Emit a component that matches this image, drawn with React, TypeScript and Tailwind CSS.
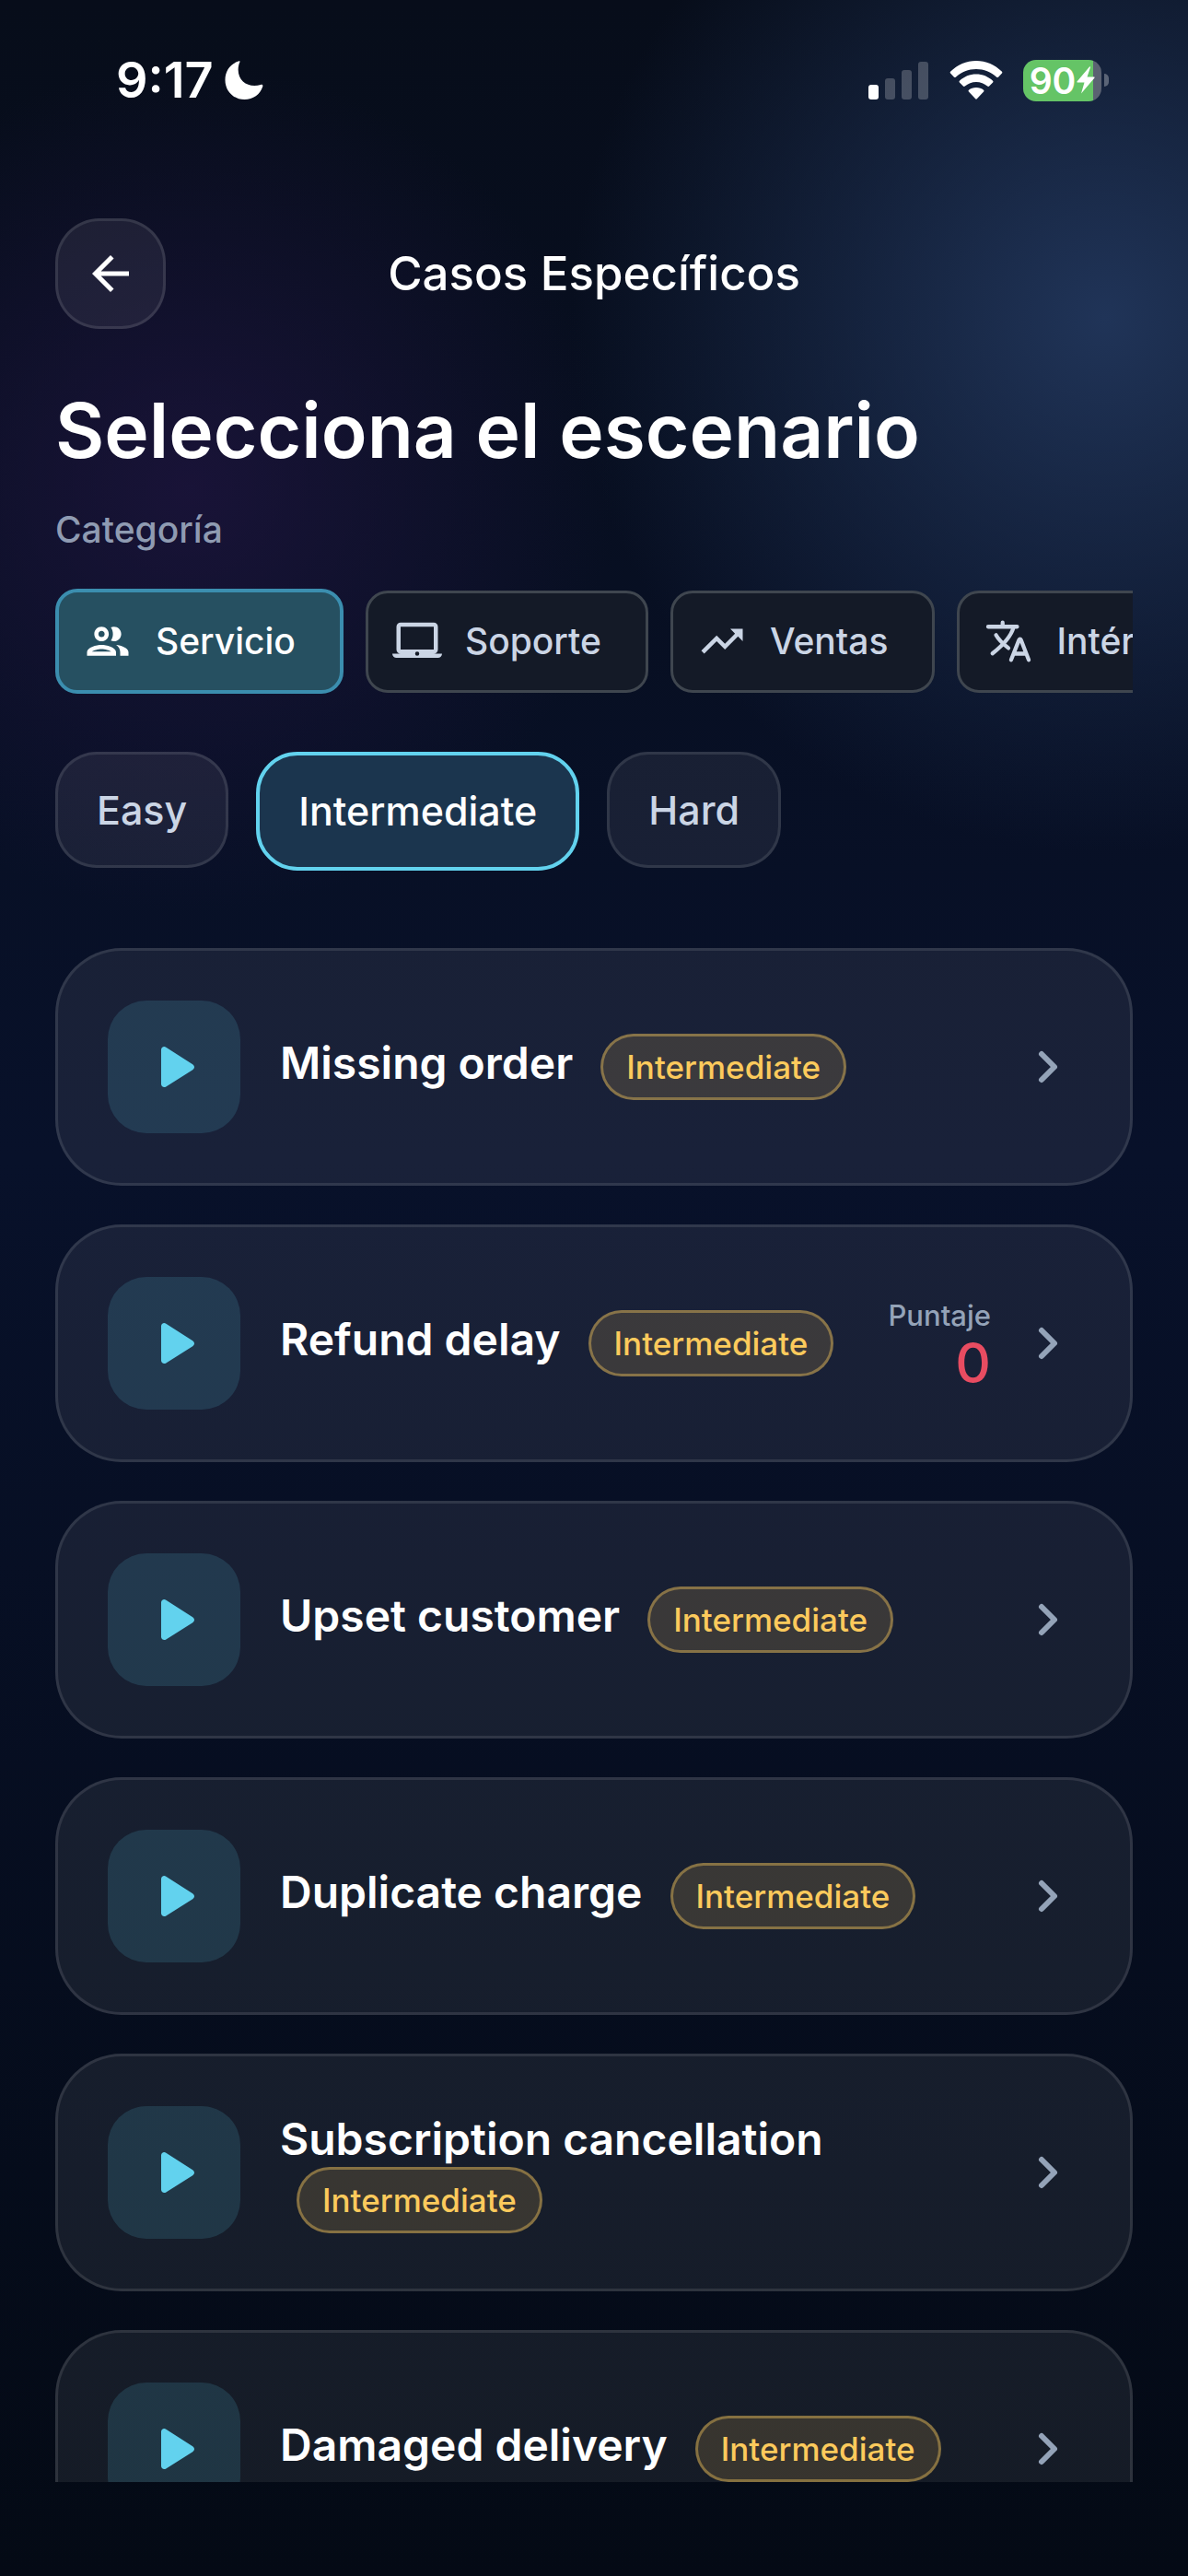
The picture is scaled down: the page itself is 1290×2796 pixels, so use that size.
import { useState } from "react";
import { MdArrowBack, MdTrendingUp } from "react-icons/md";

const PeopleIcon = () => (
  <svg className="size-[54px] shrink-0" viewBox="0 0 24 24" fill="currentColor">
    <path d="M9 13.750c-2.340 0-7 1.170-7 3.500V19h14v-1.750c0-2.330-4.660-3.500-7-3.500zM4.340 17c.84-.58 2.870-1.250 4.660-1.250s3.820.67 4.660 1.250H4.340zM9 12c1.930 0 3.500-1.570 3.500-3.500S10.930 5 9 5 5.500 6.570 5.500 8.500 7.070 12 9 12zm0-5c.83 0 1.500.67 1.500 1.500S9.830 10 9 10s-1.500-.67-1.500-1.500S8.170 7 9 7zm7.040 6.810c1.160.84 1.960 1.960 1.960 3.440V19h4v-1.750c0-2.020-3.500-3.170-5.960-3.440zM15 12c1.930 0 3.500-1.570 3.500-3.500S16.930 5 15 5c-.54 0-1.040.13-1.500.35.63.89 1 1.980 1 3.150s-.37 2.260-1 3.150c.46.22.96.35 1.500.35z" />
  </svg>
);

const LaptopIcon = () => (
  <svg className="size-[54px] shrink-0" viewBox="0 0 24 24" fill="currentColor">
    <path
      fillRule="evenodd"
      d="M20 18a2 2 0 0 0 2-2V5a2 2 0 0 0-2-2H4a2 2 0 0 0-2 2v11a2 2 0 0 0 2 2H0a2 2 0 0 0 2 2h20a2 2 0 0 0 2-2zM4 5h16v11H4zM12 19a1 1 0 1 1 0-2a1 1 0 0 1 0 2z"
    />
  </svg>
);

const TranslateIcon = () => (
  <svg
    className="size-[54px] shrink-0"
    viewBox="0 0 24 24"
    fill="none"
    stroke="currentColor"
    strokeWidth="1.900"
    strokeLinecap="round"
    strokeLinejoin="round"
  >
    <path d="M2.200 5h14M9.200 3v2M14.500 5.200C13.400 9.200 10 13.400 4.300 17.900M6 9c1.400 2.500 3.800 4.600 6 6.300M13.300 21l3.800-9.600q.5-1 1 0l3.700 9.600M14.600 18h5.800" />
  </svg>
);

const categories = [
  { id: "service", label: "Servicio", icon: <PeopleIcon /> },
  { id: "support", label: "Soporte", icon: <LaptopIcon /> },
  { id: "sales", label: "Ventas", icon: <MdTrendingUp size={54} className="shrink-0" /> },
  { id: "interpreter", label: "Intérprete", icon: <TranslateIcon /> },
];

const levels = ["Easy", "Intermediate", "Hard"];

// type
type Scenario = {
  title: string;
  level: string;
  score?: number;
};

const scenarios: Scenario[] = [
  { title: "Missing order", level: "Intermediate" },
  { title: "Refund delay", level: "Intermediate", score: 0 },
  { title: "Upset customer", level: "Intermediate" },
  { title: "Duplicate charge", level: "Intermediate" },
  { title: "Subscription cancellation", level: "Intermediate" },
  { title: "Damaged delivery", level: "Intermediate" },
];

const StatusBar = () => (
  <div className="flex h-[174px] shrink-0 items-center justify-between pl-[126px] pr-[86px]">
    <div className="flex items-center gap-3">
      <span className="text-[54px] leading-[60px] font-semibold">9:17</span>
      <svg className="size-[42px]" viewBox="0 0 42 43" fill="currentColor">
        <path d="M15.500.3C6 3 0 11 0 21.300C0 33.500 9 43 21.500 43C31 43 39 37.500 41.700 28.700C42.300 26.900 41 26 39.500 26.600C27 30.500 14.500 23.500 14.500 10C14.500 7 15.100 4 16.200 1.600C16.700.5 16.400 0 15.500.3Z" />
      </svg>
    </div>
    <div className="flex items-center">
      <svg className="h-[42px] w-[65px]" viewBox="0 0 65 42" fill="currentColor">
        <rect x="0" y="26" width="11" height="16" rx="3" />
        <rect x="18" y="19" width="11" height="23" rx="3" opacity="0.22" />
        <rect x="36" y="10" width="11" height="32" rx="3" opacity="0.22" />
        <rect x="54" y="1" width="11" height="41" rx="3" opacity="0.22" />
      </svg>
      <svg className="ml-[23px] h-[42px] w-[58px]" viewBox="0 0 57 42" fill="currentColor">
        <path d="M28.500 0C39 0 49 4.300 56.500 11.800Q57.300 12.700 56.500 13.600L52.500 17.700Q51.700 18.500 50.700 17.700C44.700 12 36.800 9 28.500 9S12.300 12 6.300 17.700Q5.300 18.500 4.500 17.700L.5 13.600Q-.3 12.700.5 11.800C8 4.300 18 0 28.500 0Z" />
        <path d="M28.500 14.500C35.300 14.500 41.700 17.100 46.600 21.700Q47.500 22.600 46.600 23.500L42.600 27.600Q41.700 28.500 40.700 27.600C37.400 24.700 33.100 23 28.500 23S19.600 24.700 16.300 27.600Q15.300 28.500 14.400 27.600L10.400 23.500Q9.500 22.600 10.400 21.700C15.300 17.100 21.700 14.500 28.500 14.500Z" />
        <path d="M28.500 29C31.600 29 34.500 30 36.600 31.800Q37.500 32.700 36.600 33.600L29.300 41.300Q28.500 42 27.700 41.300L20.400 33.600Q19.500 32.700 20.400 31.800C22.500 30 25.400 29 28.500 29Z" />
      </svg>
      <div className="ml-[22px] flex h-[45px] w-[85px] items-center justify-center rounded-[14px] bg-[linear-gradient(to_right,#65c466_90%,#5b6272_90%)]">
        <span className="text-[39px] leading-[45px] font-semibold">90</span>
        <svg className="ml-px h-[30px] w-[20px]" viewBox="0 0 20 30" fill="currentColor">
          <path d="M14 0.500L0.500 16.500Q0 17.500 1 17.500H8.500L5 29.500L19.500 12.500Q20 11.500 19 11.500H11.500L15 1Q15 0 14 0.500Z" />
        </svg>
      </div>
      <span className="ml-[3px] h-[14px] w-[5px] rounded-r-full bg-white/30" />
    </div>
  </div>
);

const ScenarioCard = ({ title, level, score }: Scenario) => (
  <li>
    <button
      type="button"
      className="flex h-[258px] w-full items-center rounded-[72px] border-3 border-white/10 bg-white/7 px-[54px] text-left"
    >
      <span className="flex size-[144px] shrink-0 items-center justify-center rounded-[42px] bg-[#5fd0ea]/15">
        <svg className="ml-2 h-[44px] w-[36px]" viewBox="0 0 36 44" fill="#62d2ee">
          <path d="M0 3.500C0 .6 3-.8 5.300.7L34.200 19.300C36.600 20.900 36.600 23.700 34.200 25.200L5.300 43.400C3 44.800 0 43.400 0 40.500Z" />
        </svg>
      </span>
      <span className="ml-[43px] flex-1 text-[48px] leading-[60px] font-semibold">
        {title}{" "}
        <span className="ml-[18px] inline-block rounded-full border-3 border-[#fcca5c]/40 bg-[#fcca5c]/15 px-[25px] align-middle text-[35px] leading-[66px] font-medium whitespace-nowrap text-[#fcca5c]">
          {level}
        </span>
      </span>
      {score !== undefined && (
        <span className="flex flex-col items-end font-medium">
          <span className="text-[31px] leading-[42px] text-[#94a3b8]">Puntaje</span>
          <span className="text-[60px] leading-[60px] text-[#e84c61]">{score}</span>
        </span>
      )}
      <svg
        className="ml-[27px] h-[54px] w-[70px] shrink-0"
        viewBox="0 0 70 54"
        fill="none"
        stroke="#94a3b8"
        strokeWidth="6"
        strokeLinecap="round"
        strokeLinejoin="round"
      >
        <path d="M28 13L42 27L28 41" />
      </svg>
    </button>
  </li>
);

const App = () => {
  const [category, setCategory] = useState("service");
  const [level, setLevel] = useState("Intermediate");

  return (
    <div className="flex h-screen flex-col overflow-hidden bg-[radial-gradient(circle_580px_at_93%_345px,#203458_0%,#20345800_100%),radial-gradient(circle_460px_at_16%_530px,#201541b3_0%,#20154100_100%),linear-gradient(to_bottom,#070d1a_0%,#08112a_45%,#040a15_100%)] font-[Inter,sans-serif] text-white">
      <StatusBar />

      {/* Header */}
      <header className="mt-[63px] grid shrink-0 grid-cols-[120px_1fr_120px] items-center px-[60px]">
        <button
          type="button"
          aria-label="Volver"
          className="flex size-[120px] items-center justify-center rounded-[48px] border-3 border-white/10 bg-white/7"
        >
          <MdArrowBack size={60} />
        </button>
        <p className="text-center text-[51px] leading-[60px] font-medium">Casos Específicos</p>
      </header>

      <main className="flex min-h-0 flex-1 flex-col px-[60px] pb-[102px]">
        <h1 className="mt-[57px] text-[82px] leading-[108px] font-semibold">
          Selecciona el escenario
        </h1>
        <h2 className="mt-[29px] text-[39px] leading-[48px] font-medium text-[#8f9bb2]">
          Categoría
        </h2>

        {/* Categories */}
        <div className="mt-10 flex shrink-0 items-center gap-6 overflow-hidden">
          {categories.map((item) => (
            <button
              key={item.id}
              type="button"
              aria-pressed={category === item.id}
              onClick={() => setCategory(item.id)}
              className={`flex shrink-0 items-center gap-[25px] rounded-3xl pl-[26px] pr-[48px] text-[39px] font-medium ${
                category === item.id
                  ? "h-[114px] border-4 border-[#3b8eaf] bg-[#265061]"
                  : "h-[111px] border-3 border-[#3f464f] bg-[#141a27] text-[#cbd5e5]"
              }`}
            >
              {item.icon}
              {item.label}
            </button>
          ))}
        </div>

        {/* Difficulty */}
        <div className="mt-[63px] flex shrink-0 items-start gap-[30px]">
          {levels.map((name) => (
            <button
              key={name}
              type="button"
              aria-pressed={level === name}
              onClick={() => setLevel(name)}
              className={`rounded-[45px] px-[42px] text-[43px] font-medium ${
                level === name
                  ? "h-[129px] border-4 border-[#62d2ee] bg-[#1b354e]"
                  : "h-[126px] border-3 border-white/10 bg-white/7 text-[#cbd5e5]"
              }`}
            >
              {name}
            </button>
          ))}
        </div>

        {/* Scenario list */}
        <ul className="mt-[84px] flex min-h-0 flex-1 flex-col gap-[42px] overflow-hidden">
          {scenarios.map((scenario) => (
            <ScenarioCard key={scenario.title} {...scenario} />
          ))}
        </ul>
      </main>
    </div>
  );
};

export default App;
